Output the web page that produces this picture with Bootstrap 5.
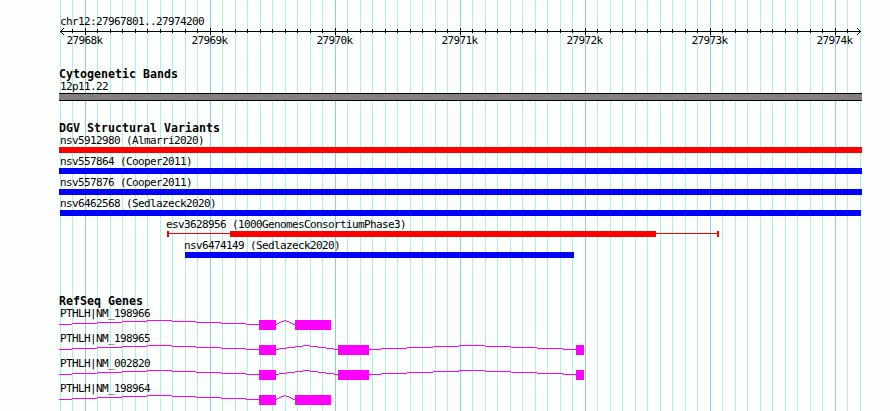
<!DOCTYPE html>
<html lang="en">
<head>
  <meta charset="UTF-8">
  <title>chr12:27967801..27974200</title>
  <meta name="viewport" content="width=device-width, initial-scale=1">
  <link href="https://cdn.jsdelivr.net/npm/bootstrap@5.3.0/dist/css/bootstrap.min.css" rel="stylesheet">
  <style>
    body {
      background-color: #fdfffc;
      color: #000;
      font-family: "DejaVu Sans Mono", monospace;
      font-size: 11px;
      line-height: 12px;
      letter-spacing: -0.622px;
    }
    .browser {
      width: 890px;
      height: 411px;
      padding: 16px 28px 0 59px;
    }
    .browser svg {
      display: block;
      shape-rendering: crispEdges;
    }
    .gridlines {
      z-index: -1;
    }
    .track-title {
      height: 12px;
      margin: 0;
      font-size: 11.6px;
      line-height: 10px;
      font-weight: bold;
      letter-spacing: 0.017px;
    }
    .feature-name {
      height: 12px;
      padding-left: 1px;
      white-space: nowrap;
    }
    .ruler-numbers {
      height: 12px;
      padding-left: 7.5px;
    }
    .ruler-numbers span {
      flex: 0 0 125px;
    }
    .track-cyto, .track-dgv {
      margin-top: 22px;
    }
    .track-genes {
      margin-top: 35px;
    }
    .cyto-band {
      height: 8px;
      background-color: #848082;
      border: solid #000;
      border-width: 1px 0;
    }
    .variant {
      height: 21px;
    }
    .gene {
      height: 25px;
    }
  </style>
</head>
<body>
  <div class="browser position-relative overflow-hidden">
    <svg class="gridlines position-absolute top-0 start-0" id="gridlines" width="890" height="411"></svg>

    <div class="ruler">
      <div class="feature-name">chr12:27967801..27974200</div>
      <svg id="ruler" width="803" height="7"></svg>
      <div class="ruler-numbers d-flex" id="rulerNumbers"></div>
    </div>

    <div class="track-cyto">
      <h6 class="track-title">Cytogenetic Bands</h6>
      <div class="feature-name">12p11.22</div>
      <div class="cyto-band"></div>
    </div>

    <div class="track-dgv">
      <h6 class="track-title">DGV Structural Variants</h6>
      <div id="variants"></div>
    </div>

    <div class="track-genes">
      <h6 class="track-title">RefSeq Genes</h6>
      <div id="genes"></div>
    </div>
  </div>

  <script src="https://cdn.jsdelivr.net/npm/bootstrap@5.3.0/dist/js/bootstrap.bundle.min.js"></script>
  <script>
    // left edge of the tracks, all x values below are page pixels
    const LEFT = 59;

    const variants = [
      { name: "nsv5912980 (Almarri2020)", color: "#ff0000", start: 59, end: 862 },
      { name: "nsv557864 (Cooper2011)", color: "#0000ff", start: 59, end: 862 },
      { name: "nsv557876 (Cooper2011)", color: "#0000ff", start: 59, end: 862 },
      { name: "nsv6462568 (Sedlazeck2020)", color: "#0000ff", start: 60, end: 861, labelX: 59 },
      { name: "esv3628956 (1000GenomesConsortiumPhase3)", color: "#ff0000", start: 230, end: 656, outer: [167, 719], labelX: 165 },
      { name: "nsv6474149 (Sedlazeck2020)", color: "#0000ff", start: 185, end: 574, labelX: 183 },
    ];

    const genes = [
      { name: "PTHLH|NM_198966", exons: [[259, 276], [295, 331]] },
      { name: "PTHLH|NM_198965", exons: [[259, 276], [338, 369], [576, 584]] },
      { name: "PTHLH|NM_002820", exons: [[259, 276], [338, 369], [576, 584]] },
      { name: "PTHLH|NM_198964", exons: [[259, 276], [295, 331]] },
    ];

    function rect(x, y, w, h, fill) {
      return `<rect x="${x}" y="${y}" width="${w}" height="${h}" fill="${fill}"/>`;
    }

    // grid and ruler ticks every 100 bp, long ones every 1000 bp
    let grid = "";
    let ticks = rect(1, 3, 801, 1, "#000");
    for (let i = 0; i <= 64; i++) {
      const x = Math.floor(60 + i * 12.5);
      const major = i % 10 === 2;
      grid += rect(x, 0, 1, 411, major ? "#87ceeb" : "#afeeee");
      if (i > 0 && i < 64) {
        ticks += major ? rect(x - LEFT, 0, 1, 7, "#000") : rect(x - LEFT, 1, 1, 4, "#000");
      }
    }
    for (let i = 1; i <= 3; i++) {
      ticks += rect(1 + i, 3 - i, 1, 1, "#000") + rect(1 + i, 3 + i, 1, 1, "#000");
      ticks += rect(801 - i, 3 - i, 1, 1, "#000") + rect(801 - i, 3 + i, 1, 1, "#000");
    }
    document.getElementById("gridlines").innerHTML = grid;
    document.getElementById("ruler").innerHTML = ticks;

    for (let k = 27968; k <= 27974; k++) {
      document.getElementById("rulerNumbers").innerHTML += `<span>${k}k</span>`;
    }

    variants.forEach(v => {
      let shapes = rect(v.start - LEFT, 0, v.end - v.start, 6, v.color);
      if (v.outer) {
        const [a, b] = v.outer;
        shapes += rect(a - LEFT, 2, b - a, 1, v.color);
        shapes += rect(a - LEFT, 0, 2, 6, v.color) + rect(b - 2 - LEFT, 0, 2, 6, v.color);
      }
      document.getElementById("variants").innerHTML += `
        <div class="variant">
          <div class="feature-name" style="margin-left:${(v.labelX || LEFT) - LEFT}px">${v.name}</div>
          <svg width="803" height="6">${shapes}</svg>
        </div>`;
    });

    // stepped hat line between two exons
    function intron(x1, x2) {
      const w = (x2 - x1) / 8;
      const levels = [4, 3, 2, 1, 0, 1, 2, 3, 4];
      return levels.map((y, i) => {
        const from = Math.floor(i === 0 ? x1 : x1 + w * (i - 0.5));
        const to = Math.floor(i === 8 ? x2 : x1 + w * (i + 0.5));
        return rect(from - LEFT, y, to - from, 1, "#ff00ff");
      }).join("");
    }

    genes.forEach(g => {
      let shapes = rect(0, 4, 1, 1, "#ff00ff") + intron(60.2, g.exons[0][0]);
      g.exons.forEach(([start, end], i) => {
        shapes += rect(start - LEFT, 0, end - start, 10, "#ff00ff");
        if (g.exons[i + 1]) shapes += intron(end, g.exons[i + 1][0]);
      });
      document.getElementById("genes").innerHTML += `
        <div class="gene">
          <div class="feature-name">${g.name}</div>
          <svg width="803" height="10">${shapes}</svg>
        </div>`;
    });
  </script>
</body>
</html>
